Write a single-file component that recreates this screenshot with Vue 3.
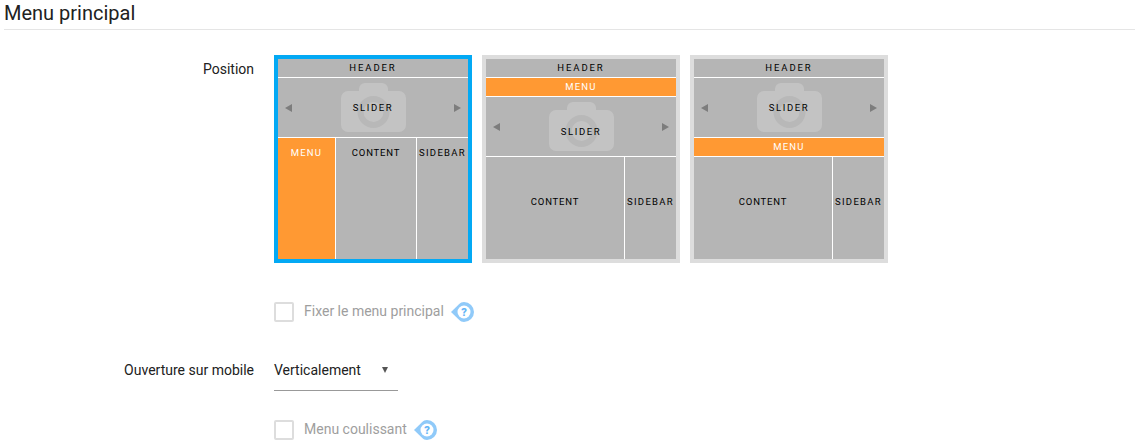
<script setup>
const tiles = [
  { id: 'left', selected: true },
  { id: 'top', selected: false },
  { id: 'below', selected: false }
]
const helpPath = 'M0 10 L8 2.200 C9.500 0.800 11 0 13 0 A10 10 0 0 1 13 20 C11 20 9.500 19.200 8 17.800 Z'
</script>

<template>
  <div class="page">
    <h2 class="title">Menu principal</h2>

    <div class="row position">
      <div class="label">Position</div>
      <div class="tiles">
        <div v-for="t in tiles" :key="t.id" class="tile" :class="{ selected: t.selected }">
          <div class="inner">
            <div class="band header">HEADER</div>
            <div v-if="t.id === 'top'" class="band menu">MENU</div>
            <div class="slider" :class="{ lowered: t.id === 'top' }">
              <svg class="camera" width="66" height="50" viewBox="0 0 66 50">
                <path d="M7 8 H18 V6 A6 6 0 0 1 24 0 H41 A6 6 0 0 1 47 6 V8 H58 A7 7 0 0 1 65 15 V42 A7 7 0 0 1 58 49 H7 A7 7 0 0 1 0 42 V15 A7 7 0 0 1 7 8 Z" fill="#c3c3c3" />
                <circle cx="32.500" cy="29" r="13" fill="none" stroke="#b8b8b8" stroke-width="6" />
              </svg>
              <span class="arrow arrow-left"></span>
              <span class="slider-text">SLIDER</span>
              <span class="arrow arrow-right"></span>
            </div>
            <div v-if="t.id === 'below'" class="band menu">MENU</div>
            <div class="columns" :class="{ wide: t.id !== 'left' }">
              <div v-if="t.id === 'left'" class="col col-menu">MENU</div>
              <div class="col col-content">CONTENT</div>
              <div class="col col-sidebar">SIDEBAR</div>
            </div>
          </div>
        </div>
      </div>
    </div>

    <div class="row check-row fix">
      <div class="label"></div>
      <span class="checkbox"></span>
      <span class="check-label">Fixer le menu principal</span>
      <svg class="help" width="23" height="20" viewBox="0 0 23 20">
        <path :d="helpPath" fill="#90caf9" />
        <circle cx="13" cy="10" r="6.500" fill="#fff" />
        <text x="13" y="13.500" text-anchor="middle" class="help-mark">?</text>
      </svg>
    </div>

    <div class="row select-row">
      <div class="label">Ouverture sur mobile</div>
      <div class="select">
        <span>Verticalement</span>
        <span class="caret"></span>
      </div>
    </div>

    <div class="row check-row slide">
      <div class="label"></div>
      <span class="checkbox"></span>
      <span class="check-label">Menu coulissant</span>
      <svg class="help" width="23" height="20" viewBox="0 0 23 20">
        <path :d="helpPath" fill="#90caf9" />
        <circle cx="13" cy="10" r="6.500" fill="#fff" />
        <text x="13" y="13.500" text-anchor="middle" class="help-mark">?</text>
      </svg>
    </div>
  </div>
</template>

<style>
html, body { background: #fff; }
</style>

<style scoped>
.page {
  width: 1141px;
  height: 447px;
  overflow: hidden;
  box-sizing: border-box;
  padding: 0 6px 0 4px;
  font-family: Roboto, "Liberation Sans", sans-serif;
  font-size: 14px;
  color: #212121;
}
.title {
  margin: 0;
  height: 29px;
  line-height: 26px;
  font-size: 20px;
  font-weight: 400;
  border-bottom: 1px solid #e5e5e5;
}
.row { display: flex; }
.label {
  width: 250px;
  flex: none;
  margin-right: 20px;
  text-align: right;
}
.position { margin-top: 25px; }
.position .label { padding-top: 6px; line-height: 16px; }
.tiles { display: flex; gap: 10px; }
.tile {
  width: 198px;
  height: 208px;
  box-sizing: border-box;
  border: 4px solid #dddddd;
}
.tile.selected { border-color: #03a9f4; }
.inner {
  height: 200px;
  display: flex;
  flex-direction: column;
  background: #b5b5b5;
  font-family: Roboto, "Liberation Sans", sans-serif;
  font-size: 9.500px;
  font-weight: 400;
  color: #000;
}
.band {
  height: 18px;
  line-height: 18px;
  text-align: center;
  flex: none;
  border-bottom: 1px solid #fff;
}
.band.header { letter-spacing: 1.900px; }
.band.menu { background: #ff9933; color: #fff; letter-spacing: 1.200px; }
.slider {
  position: relative;
  height: 59px;
  flex: none;
  display: flex;
  align-items: center;
  justify-content: space-between;
  padding: 0 7px;
  border-bottom: 1px solid #fff;
}
.camera { position: absolute; left: 63px; top: 5px; }
.slider-text { position: relative; line-height: 59px; letter-spacing: 1.600px; }
.lowered .slider-text { top: 5px; }
.arrow {
  width: 0;
  height: 0;
  position: relative;
  border-top: 4px solid transparent;
  border-bottom: 4px solid transparent;
}
.arrow-left { border-right: 7px solid #7d7d7d; }
.arrow-right { border-left: 7px solid #7d7d7d; }
.columns { flex: 1; display: flex; min-height: 0; }
.col {
  text-align: center;
  box-sizing: border-box;
  white-space: nowrap;
  padding-top: 9px;
  line-height: 11px;
}
.col-menu { width: 58px; background: #ff9933; color: #fff; border-right: 1px solid #fff; letter-spacing: 1.200px; }
.col-content { width: 81px; border-right: 1px solid #fff; letter-spacing: 0.800px; }
.col-sidebar { width: 51px; letter-spacing: 1.300px; }
.wide .col { padding-top: 39px; }
.wide .col-content { width: 139px; }
.check-row { align-items: center; height: 20px; }
.fix { margin-top: 39px; }
.slide { margin-top: 29px; }
.checkbox {
  width: 20px;
  height: 20px;
  box-sizing: border-box;
  border: 2px solid #dddddd;
  border-radius: 2px;
  flex: none;
}
.check-label { margin: 0 0 2px 10px; color: #9e9e9e; }
.help { margin-left: 7px; flex: none; }
.help-mark {
  font-family: Roboto, "Liberation Sans", sans-serif;
  font-size: 11px;
  font-weight: 900;
  fill: #64b5f6;
}
.select-row { margin-top: 28px; }
.select-row .label { padding-top: 12px; line-height: 16px; }
.select {
  width: 124px;
  height: 41px;
  box-sizing: border-box;
  display: flex;
  align-items: center;
  justify-content: space-between;
  padding-right: 10px;
  border-bottom: 1px solid #999;
}
.caret {
  width: 0;
  height: 0;
  border-left: 3.500px solid transparent;
  border-right: 3.500px solid transparent;
  border-top: 6px solid #555;
}
</style>
